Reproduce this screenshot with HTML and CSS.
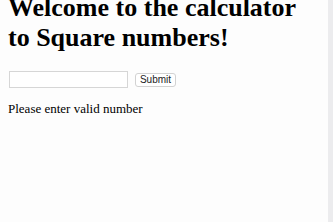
FILE: index.html
```html
<!DOCTYPE html>
<html>
	<head>
		<meta charset="UTF-8">
		<title>Square numbers</title>
		<link rel="stylesheet" href="styles.css">
	</head>
	<body>
		<div class="page">
			<div class="main">
				<h1>Welcome to the calculator to Square numbers!</h1>
				<form class="square_form">
					<input type="text" class="num_input" />
					<button type="button" class="submit_btn">Submit</button>
				</form>
				<p class="msg">Please enter valid number</p>
			</div>
			<div class="track"></div>
		</div>
	</body>
</html>
```

FILE: styles.css
```css
html,body,h1,p,form{
	margin: 0;
	padding: 0;
}
body{
	background-color: #fdfdfd;
	font-family: "Liberation Serif", "Times New Roman", serif;
	color: #000;
}
.page{
	display: flex;
	height: 100vh;
	overflow: hidden;
}
.main{
	flex: 1;
	padding: 0 8px;
}
.track{
	width: 5px;
	background-color: #ececee;
}
h1{
	font-size: 26px;
	font-weight: bold;
	line-height: 30px;
	margin-top: -7px;
	margin-bottom: 18px;
	width: 300px;
}
.square_form{
	display: flex;
	align-items: center;
	gap: 7px;
	height: 17px;
	margin-left: 1px;
}
.num_input{
	box-sizing: border-box;
	width: 119px;
	height: 17px;
	border: 1px solid #d6d6d6;
	background-color: #fff;
	padding: 0 2px;
	outline: none;
}
.submit_btn{
	box-sizing: border-box;
	height: 14px;
	width: 41px;
	padding: 0;
	border: 1px solid #d2d2d2;
	border-radius: 3px;
	background-color: #fff;
	font-family: "Liberation Sans", Arial, sans-serif;
	font-size: 10px;
	line-height: 12px;
	color: #222;
}
.msg{
	font-size: 13px;
	line-height: 15px;
	margin-top: 13px;
}
```
